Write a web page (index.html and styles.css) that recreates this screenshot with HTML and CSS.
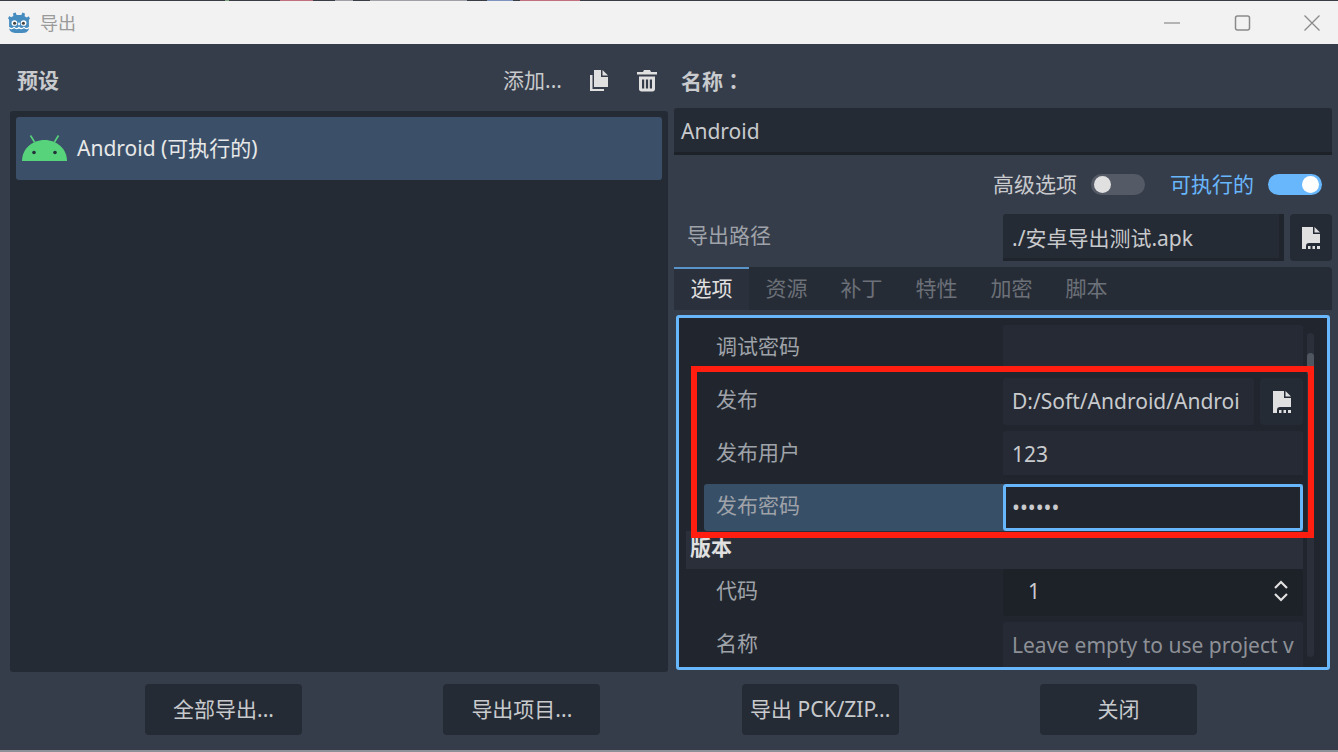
FILE: index.html
```html
<!DOCTYPE html>
<html lang="zh-CN">
<head>
    <meta charset="UTF-8">
    <meta name="viewport" content="width=device-width, initial-scale=1.0">
    <title>导出</title>
    <link rel="stylesheet" href="styles.css">
</head>
<body>
    <svg class="defs" width="0" height="0">
        <symbol id="file-pick" viewBox="0 0 18 22">
            <path fill="#e0e0e0" d="M0 0H11V7H18V16H7C5 16 4 17 4 19V22H0Z"/>
            <path fill="#e0e0e0" d="M12.500 0L18 5.500H12.500Z"/>
            <path fill="#e0e0e0" d="M6 19h2.500v3H6ZM10.500 19H13v3h-2.500ZM15 19h3v3h-3Z"/>
        </symbol>
    </svg>

    <div class="strip"></div>
    <header class="titlebar">
        <svg class="logo" width="22" height="22" viewBox="1 1 20 20">
            <path fill="#478cbf" d="M8 1.500l.8 2.300h4.400L14 1.500l2.400.9-.3 2.400 2.100 1.200 1.600-1.200 1.200 2.200-1 1.100v7.400c0 2.500-2 4.200-4.500 4.400-1.500.2-3.300.3-4.500.3s-3-.1-4.500-.3C4 19.500 2 17.800 2 15.300V7.900L1 6.800l1.200-2.200 1.600 1.200 2.100-1.200-.3-2.400Z"/>
            <circle cx="6.800" cy="11" r="2.600" fill="#fff"/>
            <circle cx="15.200" cy="11" r="2.600" fill="#fff"/>
            <circle cx="7" cy="11.200" r="1.400" fill="#414042"/>
            <circle cx="15" cy="11.200" r="1.400" fill="#414042"/>
            <rect x="10.200" y="10.500" width="1.600" height="2.600" rx=".8" fill="#fff"/>
            <path fill="none" stroke="#fff" stroke-width="1.200" d="M2 15q2.300 2.200 4.500 0q2.200 2.200 4.500 0q2.300 2.200 4.500 0q2.200 2.200 4.500 0"/>
        </svg>
        <span class="window-title">导出</span>
        <div class="window-controls">
            <svg width="20" height="20" viewBox="0 0 20 20"><path stroke="#8a8a8a" stroke-width="1.200" d="M2 10H18"/></svg>
            <svg width="20" height="20" viewBox="0 0 20 20"><rect x="3.500" y="3" width="14" height="14" rx="2" fill="none" stroke="#8a8a8a" stroke-width="1.500"/></svg>
            <svg width="20" height="20" viewBox="0 0 20 20"><path stroke="#8a8a8a" stroke-width="1.300" fill="none" d="M2.500 2.500L17.500 17.500M17.500 2.500L2.500 17.500"/></svg>
        </div>
    </header>

    <main class="dialog">
        <div class="columns">
            <section class="presets">
                <div class="presets-head">
                    <span class="heading">预设</span>
                    <span class="add-link">添加...</span>
                    <svg class="tool-icon" width="20" height="22" viewBox="0 0 20 22">
                        <path fill="#e0e0e0" d="M5 0H12V7H19V17H5Z"/>
                        <path fill="#e0e0e0" d="M13.500 0L19 5.500H13.500Z"/>
                        <path fill="#e0e0e0" d="M1 5H3.500V19H15V21H1Z"/>
                    </svg>
                    <svg class="tool-icon trash" width="22" height="22" viewBox="0 0 22 22">
                        <path fill="#e0e0e0" d="M8 0H14L15 2H21V4.500H1V2H7Z"/>
                        <path fill="#e0e0e0" fill-rule="evenodd" d="M3 6.500H19V19C19 20.500 18 21.500 16.500 21.500H5.500C4 21.500 3 20.500 3 19ZM6 9.500V18.500H8.200V9.500ZM9.900 9.500V18.500H12.100V9.500ZM13.800 9.500V18.500H16V9.500Z"/>
                    </svg>
                </div>
                <div class="preset-list">
                    <div class="preset-item">
                        <svg width="46" height="28" viewBox="0 0 46 28">
                            <path stroke="#56d37b" stroke-width="1.600" d="M8.500 1.500L12.500 8M36.500 1.500L32.500 8"/>
                            <path fill="#56d37b" d="M0 27C0 15 10 6 22.500 6S45 15 45 27Z"/>
                            <circle cx="12" cy="18.500" r="1.800" fill="#24303a"/>
                            <circle cx="33" cy="18.500" r="1.800" fill="#24303a"/>
                        </svg>
                        <span>Android (可执行的)</span>
                    </div>
                </div>
            </section>

            <section class="details">
                <div class="name-head"><span class="heading">名称<span class="colon" lang="zh-TW">：</span></span></div>
                <div class="name-input">Android</div>
                <div class="toggles">
                    <span class="toggle-label">高级选项</span>
                    <span class="switch"></span>
                    <span class="toggle-label is-on">可执行的</span>
                    <span class="switch is-on"></span>
                </div>
                <div class="path-row">
                    <span class="path-label">导出路径</span>
                    <div class="path-input">./安卓导出测试.apk</div>
                    <div class="pick-btn"><svg width="18" height="22"><use href="#file-pick"/></svg></div>
                </div>
                <div class="tabs">
                    <span class="tab is-active">选项</span>
                    <span class="tab">资源</span>
                    <span class="tab">补丁</span>
                    <span class="tab">特性</span>
                    <span class="tab">加密</span>
                    <span class="tab">脚本</span>
                </div>
                <div class="options-panel">
                    <div class="options-scroll">
                        <div class="opt-row">
                            <span class="opt-label">调试密码</span>
                            <div class="opt-value"></div>
                        </div>
                        <div class="opt-row">
                            <span class="opt-label">发布</span>
                            <div class="opt-value with-btn">
                                <div class="field">D:/Soft/Android/Androi</div>
                                <div class="pick-btn small"><svg width="18" height="22"><use href="#file-pick"/></svg></div>
                            </div>
                        </div>
                        <div class="opt-row">
                            <span class="opt-label">发布用户</span>
                            <div class="opt-value"><div class="field underlined">123</div></div>
                        </div>
                        <div class="opt-row is-selected">
                            <span class="opt-label">发布密码</span>
                            <div class="opt-value"><div class="field focused">••••••</div></div>
                        </div>
                        <div class="section-row">版本</div>
                        <div class="opt-row">
                            <span class="opt-label">代码</span>
                            <div class="opt-value">
                                <div class="field spin">
                                    <span>1</span>
                                    <svg width="16" height="22" viewBox="0 0 16 22">
                                        <path fill="none" stroke="#e0e0e0" stroke-width="2.200" d="M2 8L8 2L14 8M2 14L8 20L14 14"/>
                                    </svg>
                                </div>
                            </div>
                        </div>
                        <div class="opt-row">
                            <span class="opt-label">名称</span>
                            <div class="opt-value"><div class="field placeholder">Leave empty to use project v</div></div>
                        </div>
                    </div>
                    <div class="scrollbar"><div class="scroll-thumb"></div></div>
                </div>
            </section>
        </div>

        <footer class="actions">
            <button class="action">全部导出...</button>
            <button class="action">导出项目...</button>
            <button class="action">导出 PCK/ZIP...</button>
            <button class="action">关闭</button>
        </footer>

        <!-- marca roja de la captura -->
        <div class="callout"></div>
    </main>
</body>
</html>
```

FILE: styles.css
```css
* {
    box-sizing: border-box;
}
html, body {
    height: 100%;
}
body {
    margin: 0;
    height: 752px;
    overflow: hidden;
    display: flex;
    flex-direction: column;
    background-color: #363d4a;
    color: #c8cacd;
    font-family: "Noto Sans", "Noto Sans CJK SC", sans-serif;
    font-size: 21px;
    line-height: 28px;
}
.defs {
    position: absolute;
}
/* restos del escritorio detras de la ventana */
.strip {
    height: 1px;
    background: linear-gradient(90deg,
        #3a3d46 225px, #7fa67f 225px, #7fa67f 229px,
        #3a3d46 229px, #3a3d46 280px, #c0707f 280px, #c0707f 313px,
        #3a3d46 313px, #3a3d46 335px, #a0a0a8 335px, #a0a0a8 353px,
        #3a3d46 353px, #3a3d46 370px, #a0a0a8 370px, #a0a0a8 467px,
        #3a3d46 467px, #3a3d46 487px, #7f95c0 487px, #7f95c0 513px,
        #3a3d46 513px, #3a3d46 520px, #c0707f 520px, #c0707f 580px,
        #3a3d46 580px);
}
.titlebar {
    height: 43px;
    padding: 0 16px 0 8px;
    display: flex;
    align-items: center;
    background-color: #f2f2f2;
}
.logo {
    margin-right: 10px;
}
.window-title {
    font-size: 18px;
    color: #9a9a9a;
}
.window-controls {
    margin-left: auto;
    display: flex;
    gap: 50px;
}
.dialog {
    position: relative;
    flex: 1;
    display: flex;
    flex-direction: column;
    padding: 0 6px 0 10px;
    border-bottom: 2px solid #8d9096;
}
.columns {
    height: 628px;
    display: flex;
    gap: 6px;
}
.heading {
    font-weight: 700;
}
.colon {
    font-family: "Noto Sans CJK TC", sans-serif;
}
.presets {
    width: 658px;
    display: flex;
    flex-direction: column;
}
.presets-head {
    height: 67px;
    padding: 5px 10px 0 7px;
    display: flex;
    align-items: center;
}
.add-link {
    margin-left: auto;
    margin-right: 27px;
}
.tool-icon {
    margin-top: 2px;
    margin-right: 27px;
}
.tool-icon.trash {
    margin-right: 0;
}
.preset-list {
    height: 561px;
    padding: 6px;
    background-color: #252b34;
    border-radius: 3px;
}
.preset-item {
    height: 63px;
    padding: 0 6px 2px;
    display: flex;
    align-items: center;
    gap: 9px;
    background-color: #3b5068;
    border-radius: 3px;
    color: #e8e8e8;
}
.details {
    width: 658px;
    display: flex;
    flex-direction: column;
}
.name-head {
    height: 64px;
    padding: 9px 0 0 7px;
    display: flex;
    align-items: center;
}
.name-input {
    height: 47px;
    padding: 9px 7px 0;
    background-color: #252b34;
    border-bottom: 3px solid #1d2128;
    border-radius: 3px 3px 0 0;
}
.toggles {
    height: 59px;
    padding-right: 10px;
    display: flex;
    align-items: center;
    justify-content: flex-end;
}
.toggle-label {
    margin-bottom: 2px;
}
.toggle-label.is-on {
    margin-left: 25px;
    color: #68b6fb;
}
.switch {
    position: relative;
    width: 54px;
    height: 21px;
    margin-left: 14px;
    background-color: #555b66;
    border-radius: 11px;
}
.switch::after {
    content: "";
    position: absolute;
    top: 2px;
    left: 3px;
    width: 17px;
    height: 17px;
    border-radius: 50%;
    background-color: #e0e0e0;
}
.switch.is-on {
    background-color: #68b6fb;
}
.switch.is-on::after {
    left: auto;
    right: 3px;
    background-color: #fff;
}
.path-row {
    height: 47px;
    display: flex;
    align-items: center;
}
.path-label {
    width: 329px;
    padding: 0 0 6px 13px;
    color: #9fa3a9;
}
.path-input {
    width: 281px;
    height: 47px;
    padding: 10px 9px 0;
    background-color: #252b34;
    border-right: 5px solid #20252d;
    border-bottom: 3px solid #20252d;
    border-radius: 3px 0 0 0;
}
.pick-btn {
    width: 42px;
    height: 47px;
    margin-left: 6px;
    display: flex;
    align-items: center;
    justify-content: center;
    background-color: #252b34;
    border-radius: 4px;
}
.tabs {
    height: 43px;
    margin-top: 6px;
    display: flex;
    background-color: #262c36;
    border-radius: 4px 4px 0 0;
}
.tab {
    width: 75px;
    padding-top: 7px;
    text-align: center;
    color: #6c7078;
}
.tab.is-active {
    background-color: #2b313c;
    border-top: 2px solid #5a93c7;
    padding-top: 5px;
    color: #e0e0e0;
}
.options-panel {
    height: 355px;
    margin: 5px 2px 0;
    padding: 7px 12px 0 7px;
    display: flex;
    border: 3px solid #68b6fb;
    border-radius: 3px;
    background-color: #21262e;
    overflow: hidden;
}
.options-scroll {
    width: 617px;
    display: flex;
    flex-direction: column;
    gap: 6px;
}
.opt-row {
    height: 47px;
    flex: none;
    display: flex;
    border-radius: 3px 0 0 3px;
}
.opt-row.is-selected {
    margin-left: 18px;
    background-color: #384f68;
}
.opt-label {
    width: 317px;
    padding: 7px 0 0 30px;
    color: #9fa3a9;
}
.is-selected .opt-label {
    width: 299px;
    padding-left: 12px;
}
.opt-value {
    width: 300px;
    background-color: #252a35;
    border-radius: 3px;
}
.opt-value.with-btn {
    display: flex;
    background-color: transparent;
}
.field {
    height: 47px;
    padding: 9px 9px 0;
    background-color: #252a35;
    border-radius: 3px;
}
.with-btn .field {
    width: 251px;
    padding-right: 0;
    white-space: nowrap;
    overflow: hidden;
}
.pick-btn.small {
    width: 43px;
    margin-left: 6px;
}
.field.underlined {
    border-bottom: 3px solid #20252d;
}
.field.focused {
    padding: 6px 6px 0;
    background-color: #21262e;
    border: 3px solid #68b6fb;
}
.section-row {
    height: 38px;
    flex: none;
    margin-top: -6px;
    margin-bottom: -6px;
    padding: 2px 0 0 4px;
    background-color: #2a2f39;
    font-weight: 700;
    color: #e0e0e0;
}
.field.spin {
    padding: 8px 14px 0 25px;
    display: flex;
    align-items: flex-start;
    justify-content: space-between;
    background-color: #1d2128;
}
.field.spin svg {
    margin-top: 3px;
}
.field.placeholder {
    color: #8d9096;
    white-space: nowrap;
    overflow: hidden;
}
.scrollbar {
    width: 7px;
    height: 324px;
    margin: 8px 0 0 4px;
    flex: none;
    padding-top: 20px;
    background-color: #2a2f39;
    border-radius: 4px;
}
.scroll-thumb {
    height: 22px;
    background-color: #50565f;
    border-radius: 4px;
}
.actions {
    height: 78px;
    padding: 12px 135px 0;
    display: flex;
    justify-content: space-between;
}
.action {
    width: 157px;
    height: 51px;
    padding: 0 0 2px;
    font: inherit;
    background-color: #252b34;
    color: #c8cacd;
    border: none;
    border-radius: 4px;
}
.callout {
    position: absolute;
    top: 322px;
    left: 691px;
    width: 623px;
    height: 172px;
    border: 6px solid #ff1e10;
}
```
